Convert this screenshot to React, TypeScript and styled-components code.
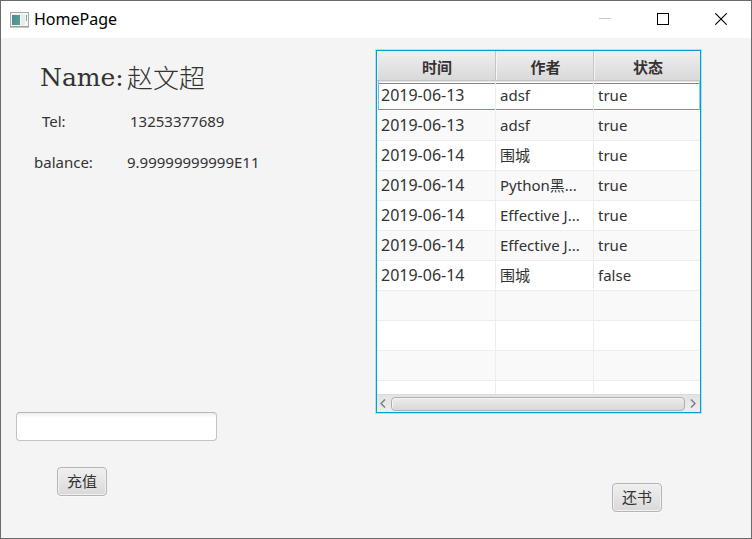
import React from "react";
import styled, { createGlobalStyle, css } from "styled-components";

const GlobalStyle = createGlobalStyle`
  *, *::before, *::after { box-sizing: border-box; }
  body {
    margin: 0;
    background: #f4f4f4;
    color: #333333;
    font-family: "Noto Sans", "Noto Sans CJK SC", sans-serif;
    font-size: 15px;
    line-height: 20px;
  }
  button, input { font: inherit; color: inherit; }
`;

const Window = styled.div`
  display: flex;
  flex-direction: column;
  min-height: 100vh;
  border: 1px solid #6b6a6b;
  background: #f4f4f4;
`;

const TitleBar = styled.header`
  display: flex;
  align-items: center;
  height: 37px;
  padding: 0 1px 0 9px;
  background: #ffffff;
  color: #000000;
`;

const Title = styled.h1`
  flex: 1;
  margin: 0;
  padding: 0 0 2px 4px;
  font-size: 16px;
  font-weight: 400;
`;

const CaptionButton = styled.button`
  display: flex;
  align-items: center;
  justify-content: center;
  width: 58px;
  height: 37px;
  padding: 0 0 2px;
  border: 0;
  background: transparent;
  color: #000000;
  &:disabled { color: #c6c6c6; }
`;

const Content = styled.main`
  display: flex;
  flex: 1;
`;

const AccountPane = styled.section`
  display: flex;
  flex: 1;
  flex-direction: column;
  min-width: 0;
  padding: 20px 15px 42px;
`;

const LoansPane = styled.section`
  display: flex;
  flex-direction: column;
  justify-content: space-between;
  padding: 12px 50px 26px 0;
`;

const Details = styled.dl`
  display: flex;
  flex-direction: column;
  gap: 21px;
  margin: 0;
`;

const Detail = styled.div<{ $indent: number; $labelWidth: number }>`
  display: grid;
  grid-template-columns: ${(p) => p.$labelWidth}px 1fr;
  align-items: center;
  padding-left: ${(p) => p.$indent}px;
  dd { margin: 0; }
`;

const NameDetail = styled(Detail)`
  height: 40px;
  margin-bottom: -8px;
  font-family: "DejaVu Serif", "Noto Sans CJK SC", serif;
  font-size: 25px;
  line-height: 40px;
  dd {
    padding-bottom: 2px;
    font-family: "Noto Sans CJK SC", sans-serif;
    font-size: 26px;
    font-weight: 300;
    line-height: 38px;
  }
`;

const TopUpForm = styled.form`
  display: flex;
  flex-direction: column;
  align-items: flex-start;
  gap: 26px;
  margin-top: auto;
`;

const AmountInput = styled.input`
  width: 201px;
  height: 29px;
  padding: 4px 8px;
  border: 1px solid #c3c3c3;
  border-top-color: #b5b5b5;
  border-radius: 4px;
  outline: 0;
  background: linear-gradient(#efefef, #ffffff 5px);
`;

const PushButton = styled.button`
  width: 50px;
  height: 29px;
  padding: 0 0 2px;
  border: 1px solid #b5b5b5;
  border-radius: 4px;
  background: linear-gradient(#f0f0f0, #d9d9d9);
  box-shadow: inset 0 0 0 1px #f1f1f1, 0 1px 0 #fafafa;
`;

const TopUpButton = styled(PushButton)`
  margin-left: 41px;
`;

const ReturnButton = styled(PushButton)`
  align-self: flex-end;
  margin-right: 39px;
`;

const TableFrame = styled.div`
  border: 1px solid #039ed3;
  background: #ffffff;
  box-shadow: 0 0 0 1px #b4dff0;
`;

const LoanTable = styled.table`
  width: 323px;
  table-layout: fixed;
  border-collapse: separate;
  border-spacing: 0;
`;

const HeadCell = styled.th`
  height: 30px;
  padding: 2px 0 0 2px;
  border-right: 1px solid #c4c4c4;
  border-bottom: 1px solid #c4c4c4;
  background: linear-gradient(#efefef, #d9d9d9);
  box-shadow: inset 1px 1px 0 #f5f5f5;
  font-weight: 700;
  &:last-child { border-right: 0; }
`;

const focused = css`
  td {
    border-bottom: 1px solid #ffffff;
    background:
      linear-gradient(#2fa9cf, #2fa9cf) 0 2px / 100% 1px no-repeat,
      linear-gradient(#2fa9cf, #2fa9cf) 0 28px / 100% 1px no-repeat,
      linear-gradient(#d5edf5, #d5edf5) 0 0 / 100% 1px no-repeat,
      #ffffff;
  }
  td:first-child { box-shadow: inset 1px 0 0 #ffffff, inset 2px 0 0 #6cc0dc; }
  td:last-child { box-shadow: inset -1px 0 0 #8ccbe0; }
`;

const Row = styled.tr<{ $focused?: boolean; $clipped?: boolean }>`
  background: #ffffff;
  &:nth-child(even) { background: #f9f9f9; }
  td {
    height: ${(p) => (p.$clipped ? 13 : 30)}px;
    padding: 0 4px ${(p) => (p.$clipped ? 0 : 2)}px;
    overflow: hidden;
    border-right: 1px solid #ededed;
    border-bottom: ${(p) => (p.$clipped ? 0 : 1)}px solid #ededed;
    text-overflow: ellipsis;
    white-space: nowrap;
  }
  td:first-child { font-size: 16px; }
  td:last-child { border-right: 0; }
  ${(p) => p.$focused && focused}
`;

const ScrollBar = styled.div`
  display: flex;
  align-items: center;
  height: 18px;
  padding-right: 1px;
  border-top: 1px solid #dcdcdc;
  background: linear-gradient(#e3e3e3, #ededed);
`;

const ScrollArrow = styled.button`
  display: flex;
  align-items: center;
  justify-content: center;
  width: 14px;
  height: 17px;
  padding: 0 2px 0 0;
  border: 0;
  background: transparent;
  color: #7d7d7d;
  &:last-child { padding: 0 0 0 2px; }
`;

const ScrollThumb = styled.div`
  flex: 1;
  height: 14px;
  border: 1px solid #b0b0b0;
  border-radius: 4px;
  background: linear-gradient(#ececec, #d8d8d8);
  box-shadow: inset 1px 1px 0 #f4f4f4;
`;

const loans = [
  ["2019-06-13", "adsf", "true"],
  ["2019-06-13", "adsf", "true"],
  ["2019-06-14", "围城", "true"],
  ["2019-06-14", "Python黑...", "true"],
  ["2019-06-14", "Effective J...", "true"],
  ["2019-06-14", "Effective J...", "true"],
  ["2019-06-14", "围城", "false"],
  ["", "", ""],
  ["", "", ""],
  ["", "", ""],
  ["", "", ""],
];

function AppIcon() {
  return (
    <svg width="20" height="16" viewBox="0 0 20 16" aria-hidden="true">
      <defs>
        <linearGradient id="pane" x1="0" y1="0" x2="1" y2="1">
          <stop offset="0" stopColor="#4a86a8" />
          <stop offset="1" stopColor="#5aa878" />
        </linearGradient>
        <linearGradient id="side" x1="0" y1="0" x2="0" y2="1">
          <stop offset="0" stopColor="#6aa2c4" />
          <stop offset="1" stopColor="#7dbb8c" />
        </linearGradient>
      </defs>
      <rect x="0.5" y="0.5" width="18" height="14" fill="#f4f6f6" stroke="#a9adb2" />
      <path d="M0 15h19" stroke="#8f9398" />
      <rect x="2" y="3" width="8" height="10" fill="url(#pane)" />
      <rect x="11" y="3" width="4" height="10" fill="#e8ecec" />
      <rect x="16" y="3" width="1" height="6" fill="url(#side)" />
    </svg>
  );
}

export default function App() {
  return (
    <>
      <GlobalStyle />
      <Window>
        <TitleBar>
          <AppIcon />
          <Title>HomePage</Title>
          <CaptionButton disabled aria-label="Minimize">
            <svg width="12" height="12" viewBox="0 0 12 12" stroke="currentColor">
              <path d="M0 5.5h12" />
            </svg>
          </CaptionButton>
          <CaptionButton aria-label="Maximize">
            <svg width="12" height="12" viewBox="0 0 12 12" fill="none" stroke="currentColor">
              <rect x="0.5" y="0.5" width="11" height="11" />
            </svg>
          </CaptionButton>
          <CaptionButton aria-label="Close">
            <svg width="12" height="12" viewBox="0 0 12 12" stroke="currentColor" strokeWidth="1.1">
              <path d="M0.3 0.3l11.4 11.4M11.7 0.3L0.3 11.7" />
            </svg>
          </CaptionButton>
        </TitleBar>
        <Content>
          <AccountPane>
            <Details>
              <NameDetail $indent={24} $labelWidth={87}>
                <dt>Name:</dt>
                <dd>赵文超</dd>
              </NameDetail>
              <Detail $indent={26} $labelWidth={88}>
                <dt>Tel:</dt>
                <dd>13253377689</dd>
              </Detail>
              <Detail $indent={18} $labelWidth={93}>
                <dt>balance:</dt>
                <dd>9.99999999999E11</dd>
              </Detail>
            </Details>
            <TopUpForm onSubmit={(e) => e.preventDefault()}>
              <AmountInput type="text" aria-label="充值" />
              <TopUpButton type="submit">充值</TopUpButton>
            </TopUpForm>
          </AccountPane>
          <LoansPane>
            <TableFrame>
              <LoanTable>
                <colgroup>
                  <col width="119" />
                  <col width="98" />
                  <col width="106" />
                </colgroup>
                <thead>
                  <tr>
                    <HeadCell scope="col">时间</HeadCell>
                    <HeadCell scope="col">作者</HeadCell>
                    <HeadCell scope="col">状态</HeadCell>
                  </tr>
                </thead>
                <tbody>
                  {loans.map((cells, i) => (
                    <Row key={i} $focused={i === 0} $clipped={i === loans.length - 1}>
                      {cells.map((text, j) => (
                        <td key={j}>{text}</td>
                      ))}
                    </Row>
                  ))}
                </tbody>
              </LoanTable>
              <ScrollBar>
                <ScrollArrow aria-label="Scroll left">
                  <svg width="6" height="9" viewBox="0 0 6 9" fill="none" stroke="currentColor" strokeWidth="1.5">
                    <path d="M5 0.5L1 4.5l4 4" />
                  </svg>
                </ScrollArrow>
                <ScrollThumb />
                <ScrollArrow aria-label="Scroll right">
                  <svg width="6" height="9" viewBox="0 0 6 9" fill="none" stroke="currentColor" strokeWidth="1.5">
                    <path d="M1 0.5l4 4-4 4" />
                  </svg>
                </ScrollArrow>
              </ScrollBar>
            </TableFrame>
            <ReturnButton type="button">还书</ReturnButton>
          </LoansPane>
        </Content>
      </Window>
    </>
  );
}
